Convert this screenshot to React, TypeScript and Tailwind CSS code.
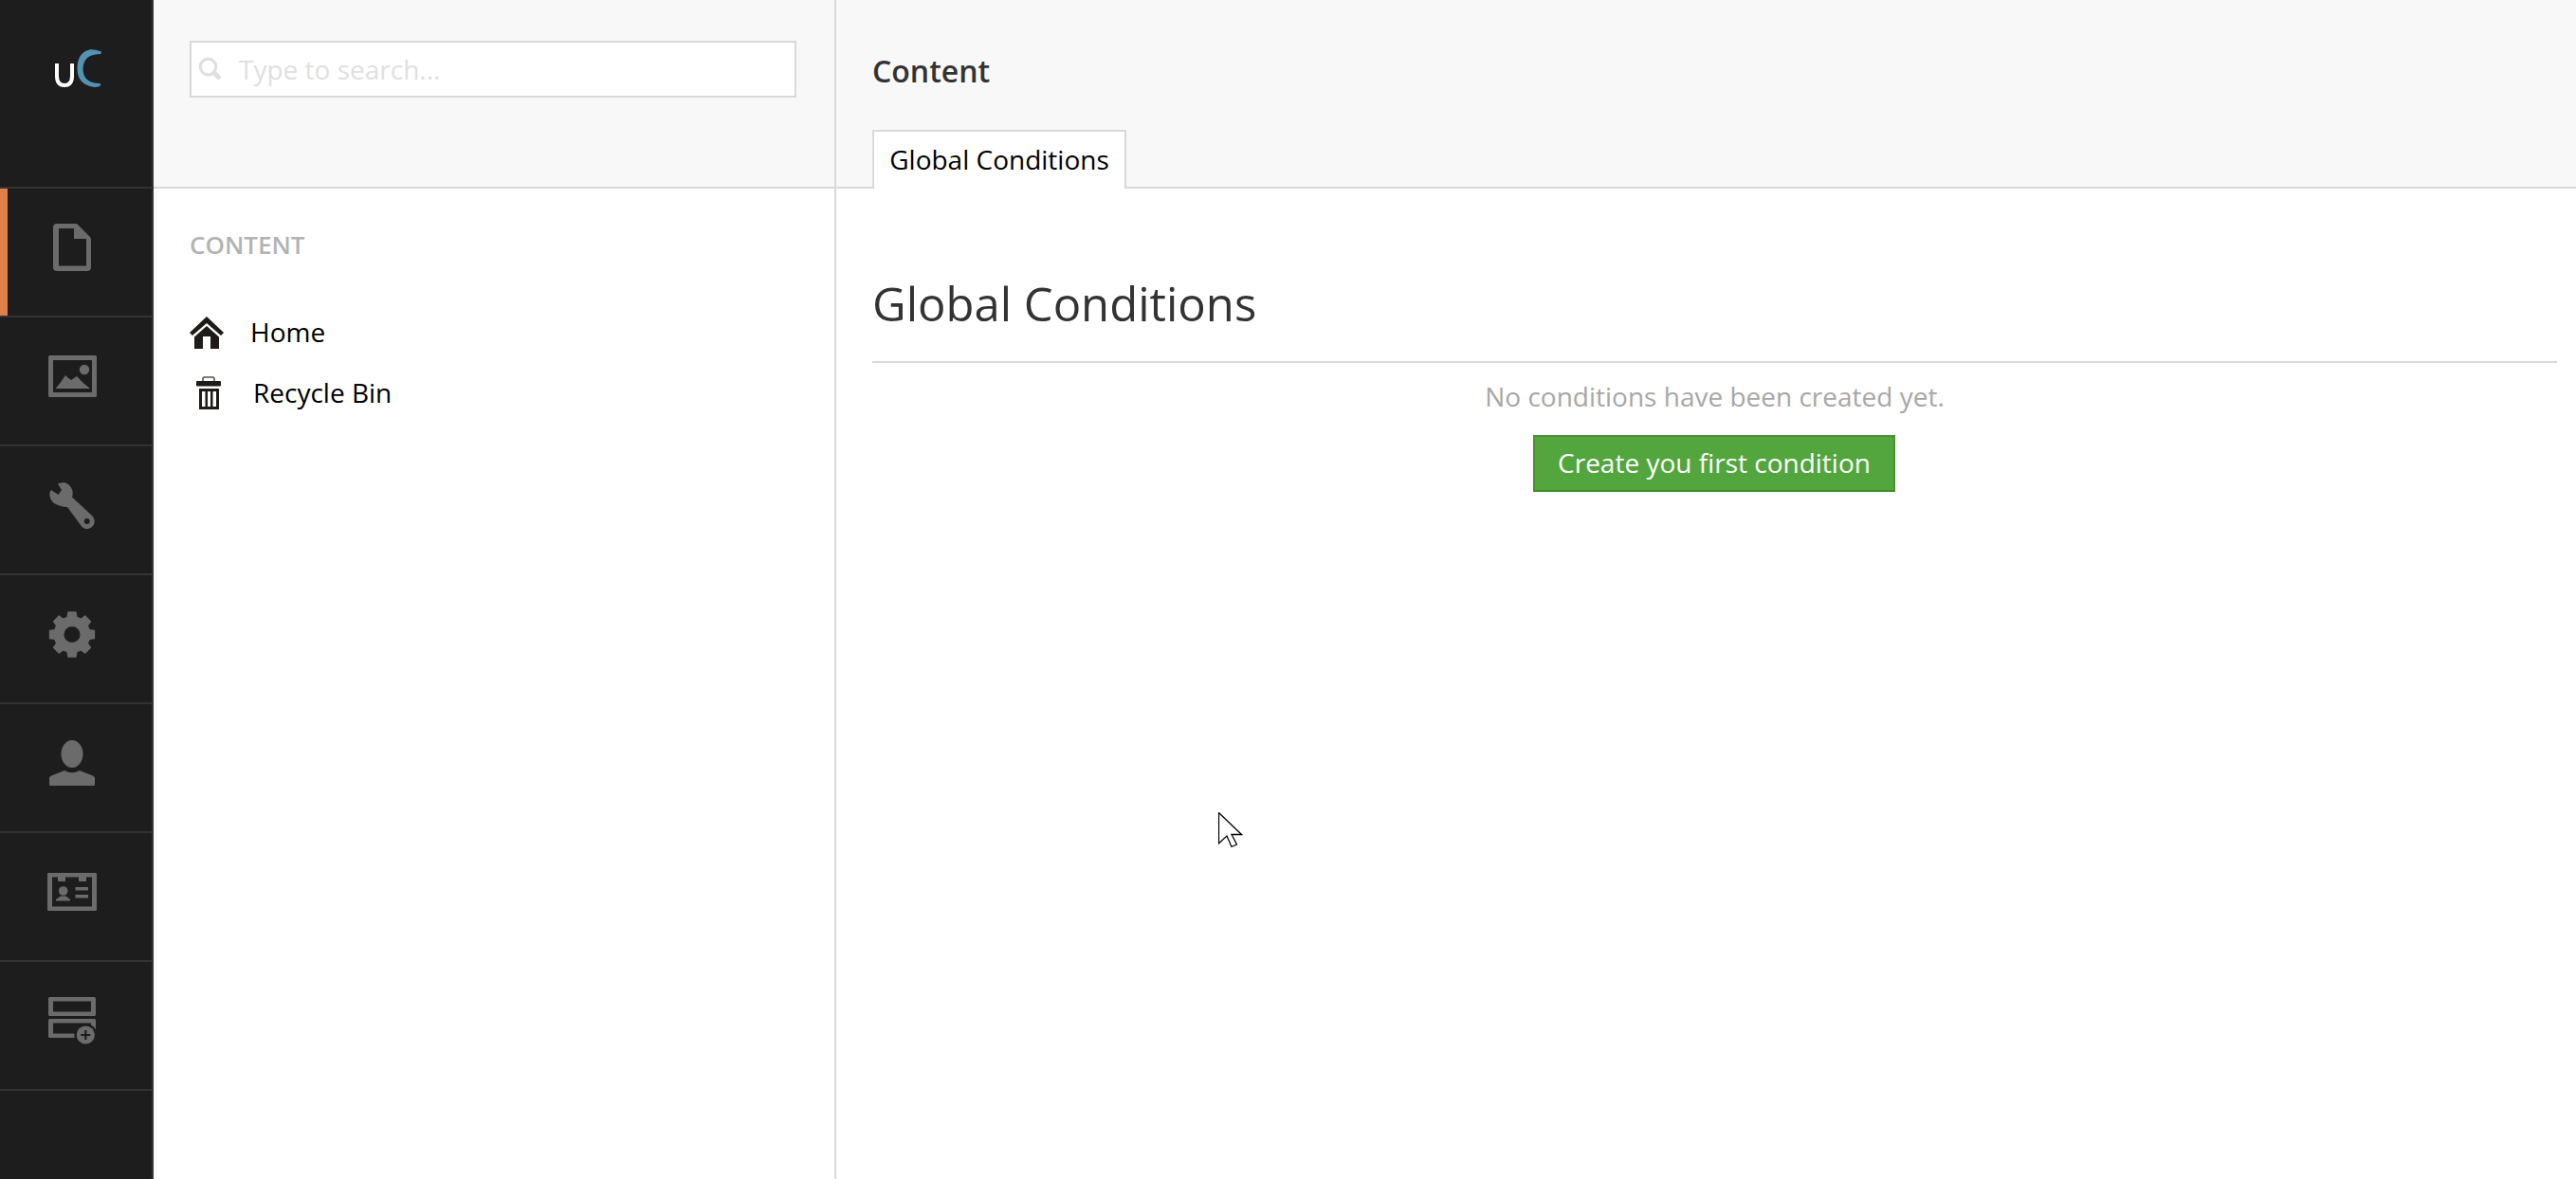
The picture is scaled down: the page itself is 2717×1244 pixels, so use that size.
import React from "react";

const gray = "#6b6b6b";

function FileIcon() {
  return (
    <svg width="40" height="50" viewBox="0 0 40 50">
      <path fillRule="evenodd" fill={gray} d="M4 0H24Q25 0 26 1L39 14Q40 15 40 17V46Q40 50 36 50H4Q0 50 0 46V4Q0 0 4 0ZM6 5V44.5H35V16H22V5Z" />
    </svg>
  );
}
function PictureIcon() {
  return (
    <svg width="51" height="44" viewBox="0 0 51 44">
      <path fillRule="evenodd" fill={gray} d="M1.5 0H49.5Q51 0 51 1.5V42.5Q51 44 49.5 44H1.5Q0 44 0 42.5V1.5Q0 0 1.5 0ZM5 5V39H46V5Z" />
      <circle cx="38" cy="15" r="5.2" fill={gray} />
      <path fill={gray} d="M7.5 35Q13 29 18 21Q21 24 24 26Q27 24 30 22Q36 29 43.5 34.5V35Z" />
    </svg>
  );
}
function WrenchIcon() {
  return (
    <svg width="48" height="49" viewBox="0 0 48 49">
      <path fillRule="evenodd" fill={gray} d="M9 1.5Q12 0 16 0A12 12 0 0 1 24 15.5L45 35A8 8 0 0 1 34.5 47.1L19 26Q12 26 5 22Q0 18 0.3 11L2 8L9.5 13L13 8ZM39.7 38A3 3 0 1 0 39.7 44A3 3 0 1 0 39.7 38Z" />
    </svg>
  );
}
function gearPath() {
  const cx = 25, cy = 24.5, R = 23.8, r = 18.8, n = 8;
  const pts: string[] = [];
  for (let i = 0; i < n; i++) {
    const a = (i * 2 * Math.PI) / n - Math.PI / 2;
    const w1 = 0.17, w2 = 0.26;
    [[r, a - w2], [R, a - w1], [R, a + w1], [r, a + w2]].forEach(([rad, t]) => {
      pts.push(`${(cx + rad * Math.cos(t)).toFixed(2)} ${(cy + rad * Math.sin(t)).toFixed(2)}`);
    });
  }
  return "M" + pts.join("L") + "Z";
}
function GearIcon() {
  return (
    <svg width="50" height="49" viewBox="0 0 50 49">
      <path fill={gray} stroke={gray} strokeWidth="1.4" strokeLinejoin="round" fillRule="evenodd" d={gearPath() + "M25 15.3A9.2 9.2 0 1 0 25 33.7A9.2 9.2 0 1 0 25 15.3Z"} />
    </svg>
  );
}
function UserIcon() {
  return (
    <svg width="48" height="48" viewBox="0 0 48 48">
      <ellipse cx="24" cy="14.5" rx="11.5" ry="14.5" fill={gray} />
      <path fill={gray} d="M0 40Q0 38.5 2 37.5L16 32Q24 36.5 32 32L46 37.5Q48 38.5 48 40V46.5Q48 48 46.5 48H1.5Q0 48 0 46.5Z" />
    </svg>
  );
}
function CardIcon() {
  return (
    <svg width="52" height="40" viewBox="0 0 52 40">
      <path fillRule="evenodd" fill={gray} d="M1 0H51Q52 0 52 1V39Q52 40 51 40H1Q0 40 0 39V1Q0 0 1 0ZM5 4.5V35.5H47V4.5Z" />
      <rect x="11" y="4" width="8" height="5" fill={gray} />
      <rect x="33" y="4" width="8" height="5" fill={gray} />
      <circle cx="16.7" cy="19" r="4.8" fill={gray} />
      <path fill={gray} d="M9 28L14 24.5H19.5L24 28V29.5H9Z" />
      <rect x="29.5" y="15" width="13.5" height="3.5" fill={gray} />
      <rect x="29.5" y="23" width="13.5" height="3.5" fill={gray} />
    </svg>
  );
}
function FormIcon() {
  return (
    <svg width="50" height="50" viewBox="0 0 50 50">
      <path fillRule="evenodd" fill={gray} d="M1.5 0H48.5Q50 0 50 1.5V18.5Q50 20 48.5 20H1.5Q0 20 0 18.5V1.5Q0 0 1.5 0ZM5 4.5V15.5H45V4.5Z" />
      <path fillRule="evenodd" fill={gray} d="M1.5 23H48.5Q50 23 50 24.5V41.5Q50 43 48.5 43H1.5Q0 43 0 41.5V24.5Q0 23 1.5 23ZM5 27.5V38.5H45V27.5Z" />
      <circle cx="39.3" cy="40" r="12" fill="#1d1d1d" />
      <circle cx="39.3" cy="40" r="9.6" fill={gray} />
      <path d="M39.3 35V45M34.3 40H44.3" stroke="#1d1d1d" strokeWidth="2.2" />
    </svg>
  );
}
function Logo() {
  return (
    <svg width="50" height="42" viewBox="0 0 50 42">
      <path d="M2 15V28Q2 38 10 38Q18 38 18 28V15" fill="none" stroke="#ffffff" strokeWidth="4" />
      <path fill="#5492b1" d="M49 2.5Q42 0 37 0.3Q23.5 3 23.5 21Q24 38 42 40Q46 40 48.5 38L47.5 36Q29.5 36 29.5 20Q30 5 48.5 5Z" />
    </svg>
  );
}
function HomeIcon() {
  return (
    <svg width="36" height="34" viewBox="0 0 36 34" className="shrink-0">
      <path fill="#1e1b18" d="M0 17L18 0L36 17L33 20L18 7L3 20Z" />
      <path fill="#1e1b18" d="M5 21.5L18 10L31 21.5V34H22V21H14V34H5Z" />
    </svg>
  );
}
function TrashIcon() {
  return (
    <svg width="26" height="35" viewBox="0 0 26 35" className="shrink-0">
      <path fill="none" stroke="#55504c" strokeWidth="1.6" d="M7 5.5V2.5Q7 1 8.5 1H17.5Q19 1 19 2.5V5.5" />
      <rect x="0" y="5" width="26" height="5.5" rx="1" fill="#1e1b18" />
      <path fillRule="evenodd" fill="#1e1b18" d="M3 13H24V35H3ZM6 16V32H21V16Z" />
      <rect x="9.5" y="16" width="2.5" height="16" fill="#1e1b18" />
      <rect x="15" y="16" width="2.5" height="16" fill="#1e1b18" />
    </svg>
  );
}
function SearchIcon() {
  return (
    <svg width="26" height="26" viewBox="0 0 26 26" className="shrink-0">
      <circle cx="10.5" cy="10.5" r="8.3" fill="none" stroke="#e0e0e0" strokeWidth="3.2" />
      <path d="M16.5 16.5L23 23" stroke="#e0e0e0" strokeWidth="5" />
    </svg>
  );
}

const items = [FileIcon, PictureIcon, WrenchIcon, GearIcon, UserIcon, CardIcon, FormIcon];

export default function App() {
  return (
    <div className="relative flex h-[1244px] w-[2717px] overflow-hidden bg-white font-['Open_Sans',sans-serif]">
      <aside className="flex h-full w-[162px] shrink-0 flex-col border-r-2 border-[#333333] bg-[#1d1d1d]">
        <div className="flex h-[197px] shrink-0 items-start justify-center pt-[52px] pl-[5px]">
          <Logo />
        </div>
        {items.map((Icon, i) => (
          <div key={i} className="h-[136px] shrink-0 border-t-2 border-[#333333]">
            <div className={i === 0 ? "flex h-full w-full items-center justify-center border-l-8 border-[#e08048] pr-[16px] pb-[10px]" : "flex h-full w-full items-center justify-center pr-[8px] pb-[10px]"}>
              <Icon />
            </div>
          </div>
        ))}
        <div className="h-[2px] shrink-0 bg-[#333333]" />
      </aside>

      <section className="flex h-full w-[720px] shrink-0 flex-col border-r-2 border-[#d9d9d9]">
        <div className="h-[199px] shrink-0 border-b-2 border-[#d9d9d9] bg-[#f8f8f8] pt-[43px] pl-[38px] pr-[38px]">
          <div className="flex h-[60px] w-[640px] items-center border-2 border-[#d9d9d9] bg-white pl-[7px]">
            <SearchIcon />
            <span className="ml-[17px] text-[28px] text-[#e0e0e0]">Type to search...</span>
          </div>
        </div>
        <div className="pl-[38px]">
          <div className="mt-[41px] text-[26px] leading-[36px] font-semibold text-[#b3b3b3]">CONTENT</div>
          <div className="mt-[58px] flex h-[34px] items-center">
            <HomeIcon />
            <span className="mb-[3px] ml-[28px] text-[28px] text-black">Home</span>
          </div>
          <div className="mt-[29px] flex h-[35px] items-center pl-[7px]">
            <TrashIcon />
            <span className="mb-[2px] ml-[34px] text-[28px] text-black">Recycle Bin</span>
          </div>
        </div>
      </section>

      <main className="flex min-w-0 flex-1 flex-col">
        <div className="flex h-[199px] shrink-0 flex-col justify-between border-b-2 border-[#d9d9d9] bg-[#f8f8f8] pl-[38px]">
          <div className="mt-[55px] text-[32px] leading-[40px] font-semibold text-[#333333]">Content</div>
          <div className="-mb-[2px] flex h-[62px] w-[268px] items-center justify-center border-2 border-b-0 border-[#d9d9d9] bg-white pb-[2px] text-[28px] text-black">
            Global Conditions
          </div>
        </div>
        <div className="pl-[38px] pr-[20px]">
          <div className="mt-[90px] flex h-[94px] items-start border-b-2 border-[#d9d9d9]">
            <h1 className="text-[49px] leading-[62px] font-normal text-[#333333]">Global Conditions</h1>
          </div>
          <div className="mt-[17px] flex flex-col items-center">
            <p className="text-[28px] leading-[36px] text-[#a9a7a4]">No conditions have been created yet.</p>
            <button className="mt-[23px] mr-[1px] flex h-[60px] w-[382px] items-center justify-center border-2 border-[#4b8f36] border-b-[#3f8a2c] bg-[#53a63d] pb-[2px] text-[28px] text-white">
              Create you first condition
            </button>
          </div>
        </div>
      </main>

      <svg className="absolute left-[1285px] top-[857px]" width="26" height="38" viewBox="0 0 26 38">
        <path d="M0.5 0.5V33L9 25L14 36.5L19.5 34L14 23.5H24.5Z" fill="white" stroke="black" strokeWidth="1.3" />
      </svg>
    </div>
  );
}
